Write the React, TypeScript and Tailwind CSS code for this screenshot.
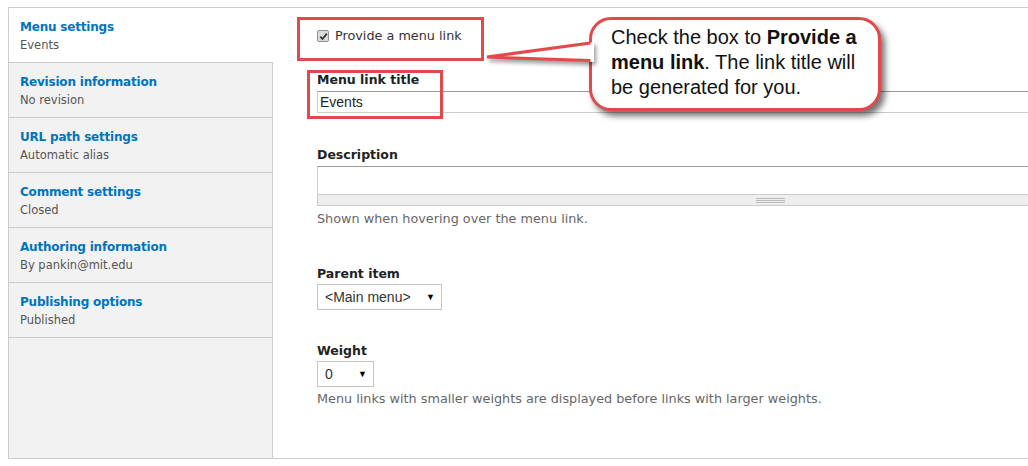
import React from 'react';

const tabs = [
  { title: 'Menu settings', summary: 'Events', active: true },
  { title: 'Revision information', summary: 'No revision', active: false },
  { title: 'URL path settings', summary: 'Automatic alias', active: false },
  { title: 'Comment settings', summary: 'Closed', active: false },
  { title: 'Authoring information', summary: 'By pankin@mit.edu', active: false },
  { title: 'Publishing options', summary: 'Published', active: false },
];

const SelectBox: React.FC<{ value: string; width: string }> = ({ value, width }) => (
  <div
    className={`mt-[2px] flex h-[26px] items-center justify-between border border-[#c4c4c4] bg-white pl-[7px] pr-[6px] text-[14px] text-[#333] ${width}`}
    style={{ fontFamily: '"Liberation Sans", Arial, sans-serif' }}
  >
    <span>{value}</span>
    <span className="text-[9px] leading-none text-black">▼</span>
  </div>
);

export default function App() {
  return (
    <div
      className="relative h-[466px] w-[1028px] overflow-hidden bg-white"
      style={{ fontFamily: '"DejaVu Sans", "Lucida Grande", sans-serif' }}
    >
      <div className="ml-[8px] mt-[7px] flex h-[452px] w-[1200px] border-y border-l border-[#cccccc]">
        {/* vertical tabs */}
        <div className="flex w-[264px] shrink-0 flex-col">
          {tabs.map((t) => (
            <div
              key={t.title}
              className={`h-[55px] border-b border-[#cccccc] pl-[11px] pt-[11px] ${
                t.active ? 'bg-white' : 'border-r bg-[#f2f2f2]'
              }`}
            >
              <div className="text-[12px] font-bold leading-[16px] tracking-[-0.2px] text-[#0074bd]">{t.title}</div>
              <div className="mt-[2px] text-[11.5px] leading-[16px] text-[#555]">{t.summary}</div>
            </div>
          ))}
          <div className="flex-1 border-r border-[#cccccc] bg-[#f2f2f2]" />
        </div>

        {/* form */}
        <div className="flex-1 pl-[44px]">
          <div className="mt-[20px] flex h-[16px] items-center gap-[6px]">
            <span className="flex h-[12px] w-[12px] items-center justify-center rounded-[2px] border border-[#8f8f8f] bg-[#dcdcdc]">
              <svg width="9" height="9" viewBox="0 0 9 9">
                <path d="M1.2 4.6 L3.5 7 L7.8 1.6" fill="none" stroke="#333" strokeWidth="1.8" />
              </svg>
            </span>
            <span className="text-[12.8px] text-[#333]">Provide a menu link</span>
          </div>

          <div className="mt-[28px] text-[12.5px] font-bold leading-[16px] text-[#222]">Menu link title</div>
          <div
            className="mt-[3px] flex h-[22px] w-[906px] items-center border border-[#cccccc] border-t-[#9a9a9a] pl-[2px] text-[14px] text-[#222]"
            style={{ fontFamily: '"Liberation Sans", Arial, sans-serif' }}
          >
            Events
          </div>

          <div className="mt-[34px] text-[12.5px] font-bold leading-[16px] text-[#222]">Description</div>
          <div className="mt-[3px] w-[906px]">
            <div className="h-[29px] border border-[#cccccc] border-t-[#9a9a9a] bg-white" />
            <div className="flex h-[11px] items-center justify-center border-x border-b border-[#cccccc] bg-[#eeeeee]">
              <div className="flex h-[5px] w-[29px] flex-col justify-between">
                <div className="h-px bg-[#bbbbbb]" />
                <div className="h-px bg-[#bbbbbb]" />
                <div className="h-px bg-[#bbbbbb]" />
              </div>
            </div>
          </div>
          <div className="mt-[5px] text-[12.8px] leading-[16px] text-[#666]">Shown when hovering over the menu link.</div>

          <div className="mt-[39px] text-[12.5px] font-bold leading-[16px] text-[#222]">Parent item</div>
          <SelectBox value="<Main menu>" width="w-[125px]" />

          <div className="mt-[33px] text-[12.5px] font-bold leading-[16px] text-[#222]">Weight</div>
          <SelectBox value="0" width="w-[57px]" />
          <div className="mt-[4px] text-[12.8px] leading-[16px] text-[#666]">
            Menu links with smaller weights are displayed before links with larger weights.
          </div>
        </div>
      </div>

      {/* annotation boxes */}
      <div className="absolute left-[297px] top-[17px] h-[44px] w-[187px] border-[3px] border-[#e2494b]" />
      <div className="absolute left-[307px] top-[70px] h-[49px] w-[136px] border-[3px] border-[#e2494b]" />

      {/* callout */}
      <div
        className="absolute left-[589px] top-[17px] h-[94px] w-[292px] rounded-[22px] border-[3px] border-[#e2494b] bg-white pl-[19px] pt-[5px] text-[20px] leading-[25px] text-[#111] shadow-[4px_5px_6px_rgba(0,0,0,0.55)]"
        style={{ fontFamily: '"Liberation Sans", Arial, sans-serif' }}
      >
        Check the box to <b>Provide a</b>
        <br />
        <b>menu link</b>. The link title will
        <br />
        be generated for you.
      </div>
      <svg
        className="absolute left-[480px] top-[36px]"
        width="120"
        height="32"
        viewBox="0 0 120 32"
        style={{ filter: 'drop-shadow(2px 3px 2px rgba(0,0,0,0.4))' }}
      >
        <polygon points="7,21 114,6 114,26" fill="white" />
        <polyline points="110.5,7 7,21 110.5,24.5" fill="none" stroke="#e2494b" strokeWidth="3" strokeLinejoin="miter" />
      </svg>
    </div>
  );
}
